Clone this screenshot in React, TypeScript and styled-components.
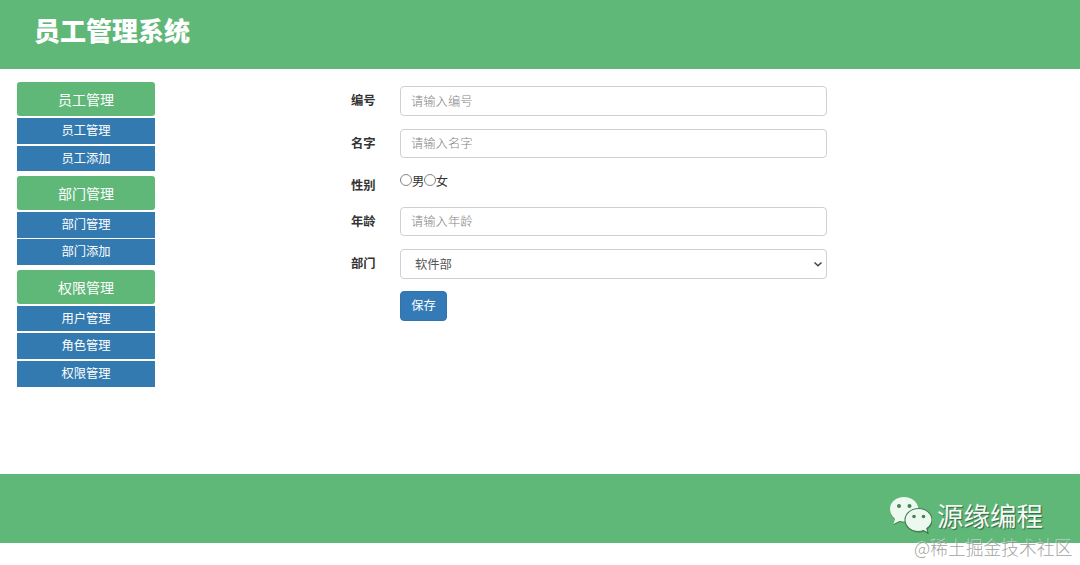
import React from 'react';
import styled, { createGlobalStyle } from 'styled-components';

const GlobalStyle = createGlobalStyle`
  *, *::before, *::after { box-sizing: border-box; }
  body {
    margin: 0;
    background: #fff;
    color: #333;
    font-family: "Noto Sans CJK SC", sans-serif;
    font-size: 12.3px;
    line-height: 18px;
  }
`;

const Page = styled.div`
  position: relative;
  height: 565px;
  overflow: hidden;
  display: flex;
  flex-direction: column;
`;

const Header = styled.header`
  flex: none;
  height: 69px;
  padding: 11px 0 0 34px;
  background: #5fb878;
`;

const Title = styled.h1`
  margin: 0;
  color: #fff;
  font-size: 26px;
  line-height: 38px;
  font-weight: 900;
`;

const Main = styled.div`
  flex: none;
  height: 405px;
  display: flex;
`;

const Sidebar = styled.nav`
  width: 138px;
  margin-left: 17px;
  padding-top: 13px;
`;

const Group = styled.section`
  height: 93.8px;
`;

const GroupTitle = styled.div`
  height: 34.4px;
  margin-bottom: 1.6px;
  border-radius: 3px;
  background: #5fb878;
  color: #fff;
  font-size: 14px;
  line-height: 34.6px;
  text-align: center;
`;

const MenuItem = styled.a`
  display: block;
  height: 25.8px;
  margin-bottom: 1.8px;
  background: #337ab0;
  color: #fff;
  line-height: 25.4px;
  text-align: center;
`;

const Form = styled.form`
  width: 476px;
  margin-left: 196px;
  padding-top: 17.4px;
`;

const Row = styled.div<{ $height?: number }>`
  display: flex;
  height: ${(p) => p.$height ?? 42.3}px;
`;

const Label = styled.label`
  width: 49px;
  padding-top: 5px;
  font-weight: 700;
`;

const Field = styled.div`
  flex: 1;
  display: flex;
  align-items: flex-start;
`;

const Input = styled.input`
  width: 427px;
  height: 29.5px;
  padding: 0 10px 1px;
  border: 1px solid #d0d0d0;
  border-radius: 4px;
  background: #fff;
  color: #555;
  font: inherit;
  outline: none;
  &::placeholder { color: #858585; font-weight: 300; opacity: 1; }
`;

const SelectBox = styled.div`
  width: 427px;
  height: 29.5px;
  padding: 0 3px 0 14px;
  display: flex;
  align-items: center;
  justify-content: space-between;
  border: 1px solid #d0d0d0;
  border-radius: 4px;
  color: #555;
`;

const Radio = styled.input`
  appearance: none;
  flex: none;
  width: 12px;
  height: 12px;
  margin: 3px 0 0;
  border: 1px solid #858585;
  border-radius: 50%;
`;

const RadioText = styled.span`
  width: 11.7px;
  white-space: nowrap;
  padding-top: 1px;
`;

const SaveButton = styled.button`
  width: 47px;
  height: 30px;
  margin-top: -0.5px;
  padding: 0 0 2px;
  border: 1px solid #2e74ae;
  border-radius: 4px;
  background: #337ab7;
  color: #fff;
  font: inherit;
`;

const Footer = styled.footer`
  flex: none;
  height: 69px;
  background: #5fb878;
`;

const Brand = styled.div`
  position: absolute;
  left: 889px;
  top: 495px;
  display: flex;
  align-items: center;
  gap: 5px;
  color: #f4fbf5;
  font-size: 26.5px;
  line-height: 40px;
  white-space: nowrap;
  text-shadow: 1px 1px 1px rgba(40, 70, 50, 0.75);
`;

const Credit = styled.div`
  position: absolute;
  left: 914px;
  top: 535px;
  color: rgba(150, 150, 150, 0.9);
  font-size: 17.8px;
  font-weight: 300;
  line-height: 24px;
  white-space: nowrap;
  text-shadow: -1px -1px 0 rgba(255, 255, 255, 0.5);
`;

const groups = [
  { title: '员工管理', items: ['员工管理', '员工添加'] },
  { title: '部门管理', items: ['部门管理', '部门添加'] },
  { title: '权限管理', items: ['用户管理', '角色管理', '权限管理'] },
];

const Chevron = () => (
  <svg width="10" height="8" viewBox="0 0 10 8" fill="none">
    <path d="M1.500 2.500 5 5.800 8.500 2.500" stroke="#444" strokeWidth="1.500" />
  </svg>
);

const BIG_BUBBLE = 'M15 1C7 1 1 6 1 13c0 4 2 7 5 10l-1.500 5 6-3c12 3 19-4 19-12C29 6 23 1 15 1Z';
const SMALL_BUBBLE = 'M29.500 12.500c-7.500 0-13.500 5-13.500 11.500s6 11.500 13.500 11.500c2 0 3.500-.3 5-1l4.500 2.500-1.200-4.500c3.200-2.200 5.200-5 5.200-8.500 0-6.500-6-11.500-13.500-11.500Z';

const ChatBubbles = () => (
  <svg width="43" height="38" viewBox="0 0 43 38">
    <g fill="#2d5d3c" opacity="0.65" transform="translate(0.300 1)">
      <path d={BIG_BUBBLE} />
      <path d={SMALL_BUBBLE} />
    </g>
    <path fill="#edf8ef" d={BIG_BUBBLE} />
    <path fill="#edf8ef" stroke="#3f7c50" strokeWidth="1.100" d={SMALL_BUBBLE} />
    <g fill="#438454">
      <circle cx="10" cy="10" r="2" />
      <circle cx="20.500" cy="10" r="2" />
      <circle cx="25" cy="20.500" r="1.800" />
      <circle cx="34.500" cy="20.500" r="1.800" />
    </g>
  </svg>
);

export default function App() {
  return (
    <Page>
      <GlobalStyle />
      <Header><Title>员工管理系统</Title></Header>
      <Main>
        <Sidebar>
          {groups.map((g) => (
            <Group key={g.title}>
              <GroupTitle>{g.title}</GroupTitle>
              {g.items.map((item) => <MenuItem key={item}>{item}</MenuItem>)}
            </Group>
          ))}
        </Sidebar>
        <Form>
          <Row><Label>编号</Label><Field><Input placeholder="请输入编号" /></Field></Row>
          <Row><Label>名字</Label><Field><Input placeholder="请输入名字" /></Field></Row>
          <Row $height={36}>
            <Label>性别</Label>
            <Field>
              <Radio type="radio" name="gender" /><RadioText>男</RadioText>
              <Radio type="radio" name="gender" /><RadioText>女</RadioText>
            </Field>
          </Row>
          <Row><Label>年龄</Label><Field><Input placeholder="请输入年龄" /></Field></Row>
          <Row><Label>部门</Label><Field><SelectBox>软件部<Chevron /></SelectBox></Field></Row>
          <Row><Label /><Field><SaveButton type="button">保存</SaveButton></Field></Row>
        </Form>
      </Main>
      <Footer />
      <Brand><ChatBubbles />源缘编程</Brand>
      <Credit>@稀土掘金技术社区</Credit>
    </Page>
  );
}
